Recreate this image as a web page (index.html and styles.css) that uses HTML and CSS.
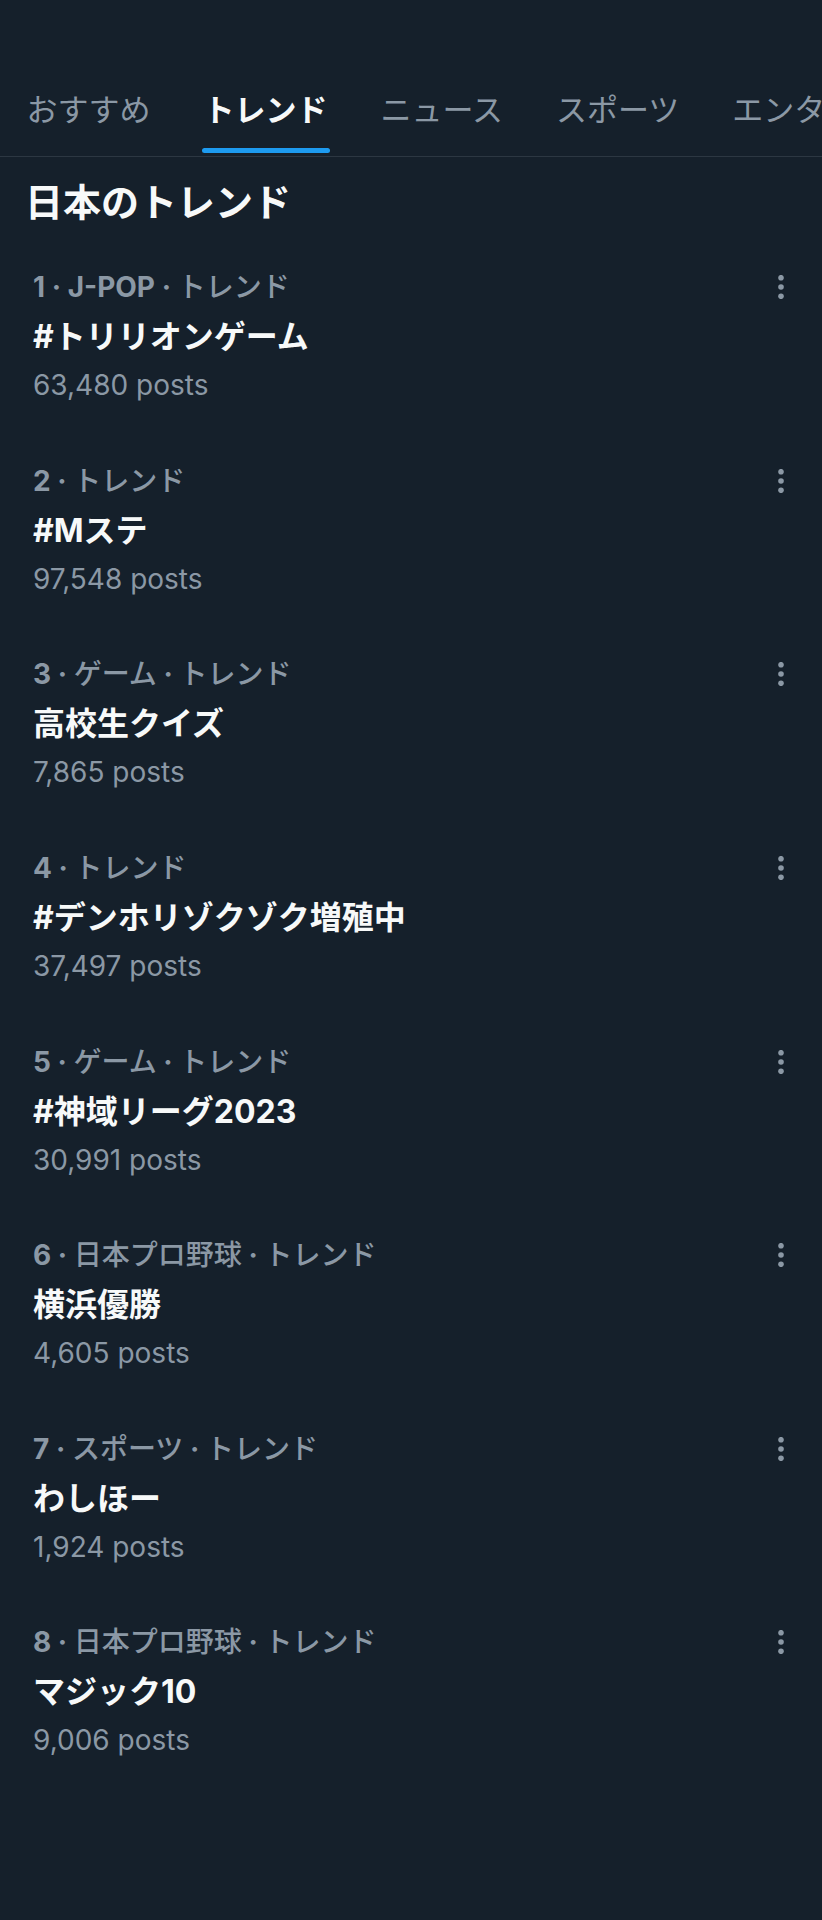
FILE: index.html
```html
<!DOCTYPE html>
<html lang="ja">
<head>
    <meta charset="UTF-8">
    <meta name="viewport" content="width=device-width, initial-scale=1.0">
    <title>トレンド</title>
    <link rel="stylesheet" href="styles.css">
</head>
<body>

    <div class="screen">
        <!-- Tabs -->
        <nav class="tabs">
            <div class="tab">おすすめ</div>
            <div class="tab active">トレンド</div>
            <div class="tab">ニュース</div>
            <div class="tab">スポーツ</div>
            <div class="tab">エンタメ</div>
        </nav>

        <h2 class="section-title">日本のトレンド</h2>

        <!-- Trend list -->
        <div class="trend-list">
            <div class="trend">
                <div class="trend-body">
                    <div class="meta"><b>1 · J-POP · </b>トレンド</div>
                    <div class="name">#トリリオンゲーム</div>
                    <div class="count">63,480 posts</div>
                </div>
                <svg class="more" viewBox="0 0 24 24"><circle cx="12" cy="2.7" r="2.8"/><circle cx="12" cy="12" r="2.8"/><circle cx="12" cy="21.3" r="2.8"/></svg>
            </div>
            <div class="trend">
                <div class="trend-body">
                    <div class="meta"><b>2 · </b>トレンド</div>
                    <div class="name">#Mステ</div>
                    <div class="count">97,548 posts</div>
                </div>
                <svg class="more" viewBox="0 0 24 24"><circle cx="12" cy="2.7" r="2.8"/><circle cx="12" cy="12" r="2.8"/><circle cx="12" cy="21.3" r="2.8"/></svg>
            </div>
            <div class="trend">
                <div class="trend-body">
                    <div class="meta"><b>3 · </b>ゲーム<b> · </b>トレンド</div>
                    <div class="name">高校生クイズ</div>
                    <div class="count">7,865 posts</div>
                </div>
                <svg class="more" viewBox="0 0 24 24"><circle cx="12" cy="2.7" r="2.8"/><circle cx="12" cy="12" r="2.8"/><circle cx="12" cy="21.3" r="2.8"/></svg>
            </div>
            <div class="trend">
                <div class="trend-body">
                    <div class="meta"><b>4 · </b>トレンド</div>
                    <div class="name">#デンホリゾクゾク増殖中</div>
                    <div class="count">37,497 posts</div>
                </div>
                <svg class="more" viewBox="0 0 24 24"><circle cx="12" cy="2.7" r="2.8"/><circle cx="12" cy="12" r="2.8"/><circle cx="12" cy="21.3" r="2.8"/></svg>
            </div>
            <div class="trend">
                <div class="trend-body">
                    <div class="meta"><b>5 · </b>ゲーム<b> · </b>トレンド</div>
                    <div class="name">#神域リーグ2023</div>
                    <div class="count">30,991 posts</div>
                </div>
                <svg class="more" viewBox="0 0 24 24"><circle cx="12" cy="2.7" r="2.8"/><circle cx="12" cy="12" r="2.8"/><circle cx="12" cy="21.3" r="2.8"/></svg>
            </div>
            <div class="trend">
                <div class="trend-body">
                    <div class="meta"><b>6 · </b>日本プロ野球<b> · </b>トレンド</div>
                    <div class="name">横浜優勝</div>
                    <div class="count">4,605 posts</div>
                </div>
                <svg class="more" viewBox="0 0 24 24"><circle cx="12" cy="2.7" r="2.8"/><circle cx="12" cy="12" r="2.8"/><circle cx="12" cy="21.3" r="2.8"/></svg>
            </div>
            <div class="trend">
                <div class="trend-body">
                    <div class="meta"><b>7 · </b>スポーツ<b> · </b>トレンド</div>
                    <div class="name">わしほー</div>
                    <div class="count">1,924 posts</div>
                </div>
                <svg class="more" viewBox="0 0 24 24"><circle cx="12" cy="2.7" r="2.8"/><circle cx="12" cy="12" r="2.8"/><circle cx="12" cy="21.3" r="2.8"/></svg>
            </div>
            <div class="trend">
                <div class="trend-body">
                    <div class="meta"><b>8 · </b>日本プロ野球<b> · </b>トレンド</div>
                    <div class="name">マジック10</div>
                    <div class="count">9,006 posts</div>
                </div>
                <svg class="more" viewBox="0 0 24 24"><circle cx="12" cy="2.7" r="2.8"/><circle cx="12" cy="12" r="2.8"/><circle cx="12" cy="21.3" r="2.8"/></svg>
            </div>
        </div>
    </div>

</body>
</html>
```

FILE: styles.css
```css
body {
    margin: 0; background: #15202b; color: #f7f9f9;
    font-family: Inter, "Noto Sans CJK JP", sans-serif;
}
.screen { height: 1824px; overflow: hidden; }

/* tab bar */
.tabs {
    display: flex; white-space: nowrap; overflow: hidden;
    padding-top: 90px; border-bottom: 1px solid #2c3742;
}
.tab {
    flex: none; padding: 0 26.5px 3px; font-size: 31px; line-height: 40px;
    color: #8b98a5;
}
.tab.active { color: #f7f9f9; font-weight: 700; }
.tab::after {
    content: ""; display: block; height: 5px; margin: 18px -2px 0;
    border-radius: 3px;
}
.tab.active::after { background: #1d9bf0; }

.section-title {
    margin: 19.5px 0 12px 25px; font-size: 38px; line-height: 50px; font-weight: 700;
}

/* trends */
.trend { display: flex; padding: 25.8px 29px 25.8px 33px; }
.trend-body { flex: 1; }
.meta { font-size: 28px; line-height: 46px; color: #8b98a5; font-weight: 500; }
.meta b { font-weight: 700; }
.name { font-size: 32px; line-height: 54px; font-weight: 700; }
.count { font-size: 28px; line-height: 42px; color: #8b98a5; }
.more { width: 24px; height: 24px; margin-top: 11px; fill: #8b98a5; }
```
